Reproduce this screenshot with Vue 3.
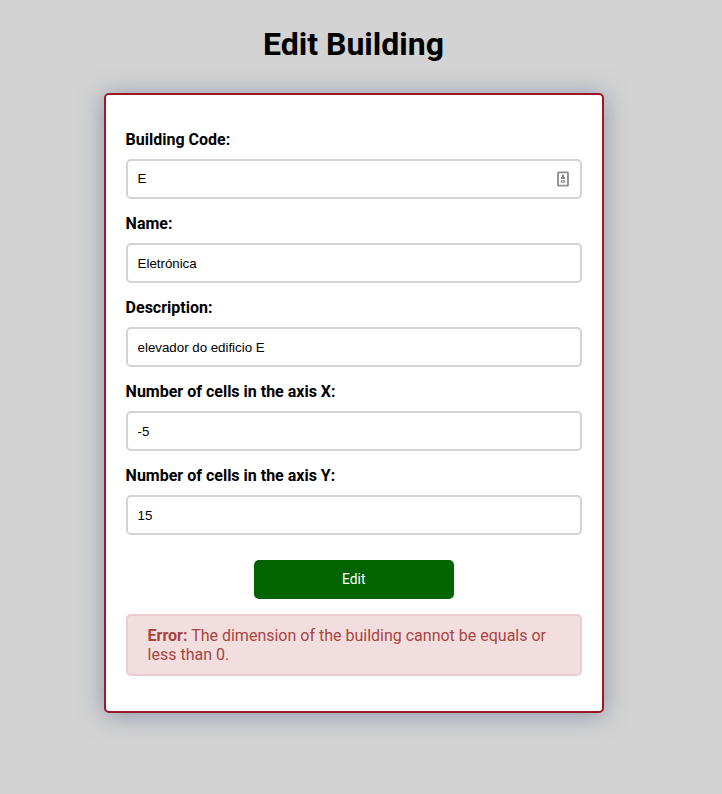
<script setup>
import { reactive } from 'vue'

const fields = reactive([
  { id: 'code', label: 'Building Code:', value: 'E', contact: true },
  { id: 'name', label: 'Name:', value: 'Eletrónica' },
  { id: 'description', label: 'Description:', value: 'elevador do edificio E' },
  { id: 'cells-x', label: 'Number of cells in the axis X:', value: '-5' },
  { id: 'cells-y', label: 'Number of cells in the axis Y:', value: '15' },
])
</script>

<template>
  <main class="page">
    <h1 class="title">Edit Building</h1>
    <form class="card" @submit.prevent>
      <div v-for="field in fields" :key="field.id" class="field">
        <label class="label" :for="field.id">{{ field.label }}</label>
        <div class="control">
          <input
            :id="field.id"
            v-model="field.value"
            class="input"
            :class="{ 'input-contact': field.contact }"
            type="text"
          />
          <svg v-if="field.contact" class="contact" width="12" height="16" viewBox="0 0 12 16">
            <rect x="1" y="1.4" width="10" height="13.2" rx="0.6" fill="#fff" stroke="#8f8f8f" stroke-width="1.9" />
            <path d="M5 3.8h2v2.2h1v2H4v-2h1Z" fill="#858585" />
            <path d="M3.6 9h4.8v3H3.6Z" fill="#b0b0b0" />
          </svg>
        </div>
      </div>
      <button class="submit" type="submit">Edit</button>
      <div class="alert"><strong>Error:</strong> The dimension of the building cannot be equals or less than 0.</div>
    </form>
  </main>
</template>

<style>
body {
  background: #d3d3d3;
}
</style>

<style scoped>
.page {
  min-height: 794px;
  box-sizing: border-box;
  padding-top: 25px;
  font-family: Roboto, sans-serif;
  font-size: 16px;
  color: #000;
}
.title {
  width: 499px;
  margin: 0 0 30px 104px;
  font-size: 32px;
  line-height: 38px;
  font-weight: 700;
  text-align: center;
}
.card {
  box-sizing: border-box;
  width: 500px;
  height: 620px;
  margin-left: 104px;
  padding: 35px 20px 0 19.6px;
  background: #fff;
  border: 2px solid #9b1824;
  border-radius: 5px;
  box-shadow: 0 2px 25px rgba(115, 128, 155, 0.75);
  display: flex;
  flex-direction: column;
}
.field {
  height: 84px;
}
.label {
  display: block;
  font-weight: 700;
  line-height: 19px;
  margin-bottom: 10px;
}
.control {
  position: relative;
}
.input {
  display: block;
  box-sizing: border-box;
  width: 456px;
  height: 40px;
  padding: 0 10px;
  border: 2px solid #d3d3d3;
  border-radius: 5px;
  background: #fff;
  color: #000;
  font: 13.333px "Liberation Sans", sans-serif;
  letter-spacing: -0.02px;
  outline: none;
}
.input-contact {
  padding-bottom: 2px;
}
.contact {
  position: absolute;
  top: 12px;
  right: 13px;
}
.submit {
  align-self: center;
  width: 200px;
  height: 39px;
  margin-top: 10px;
  padding: 0 0 1px;
  border: 0;
  border-radius: 5px;
  background: #006400;
  color: #fff;
  font: 400 13.8px Roboto, sans-serif;
}
.alert {
  box-sizing: border-box;
  height: 62px;
  margin-top: 15px;
  padding: 10px 20px;
  border: 2px solid #ebccd1;
  border-radius: 5px;
  background: #f2dede;
  color: #a94442;
  line-height: 19px;
}
</style>
